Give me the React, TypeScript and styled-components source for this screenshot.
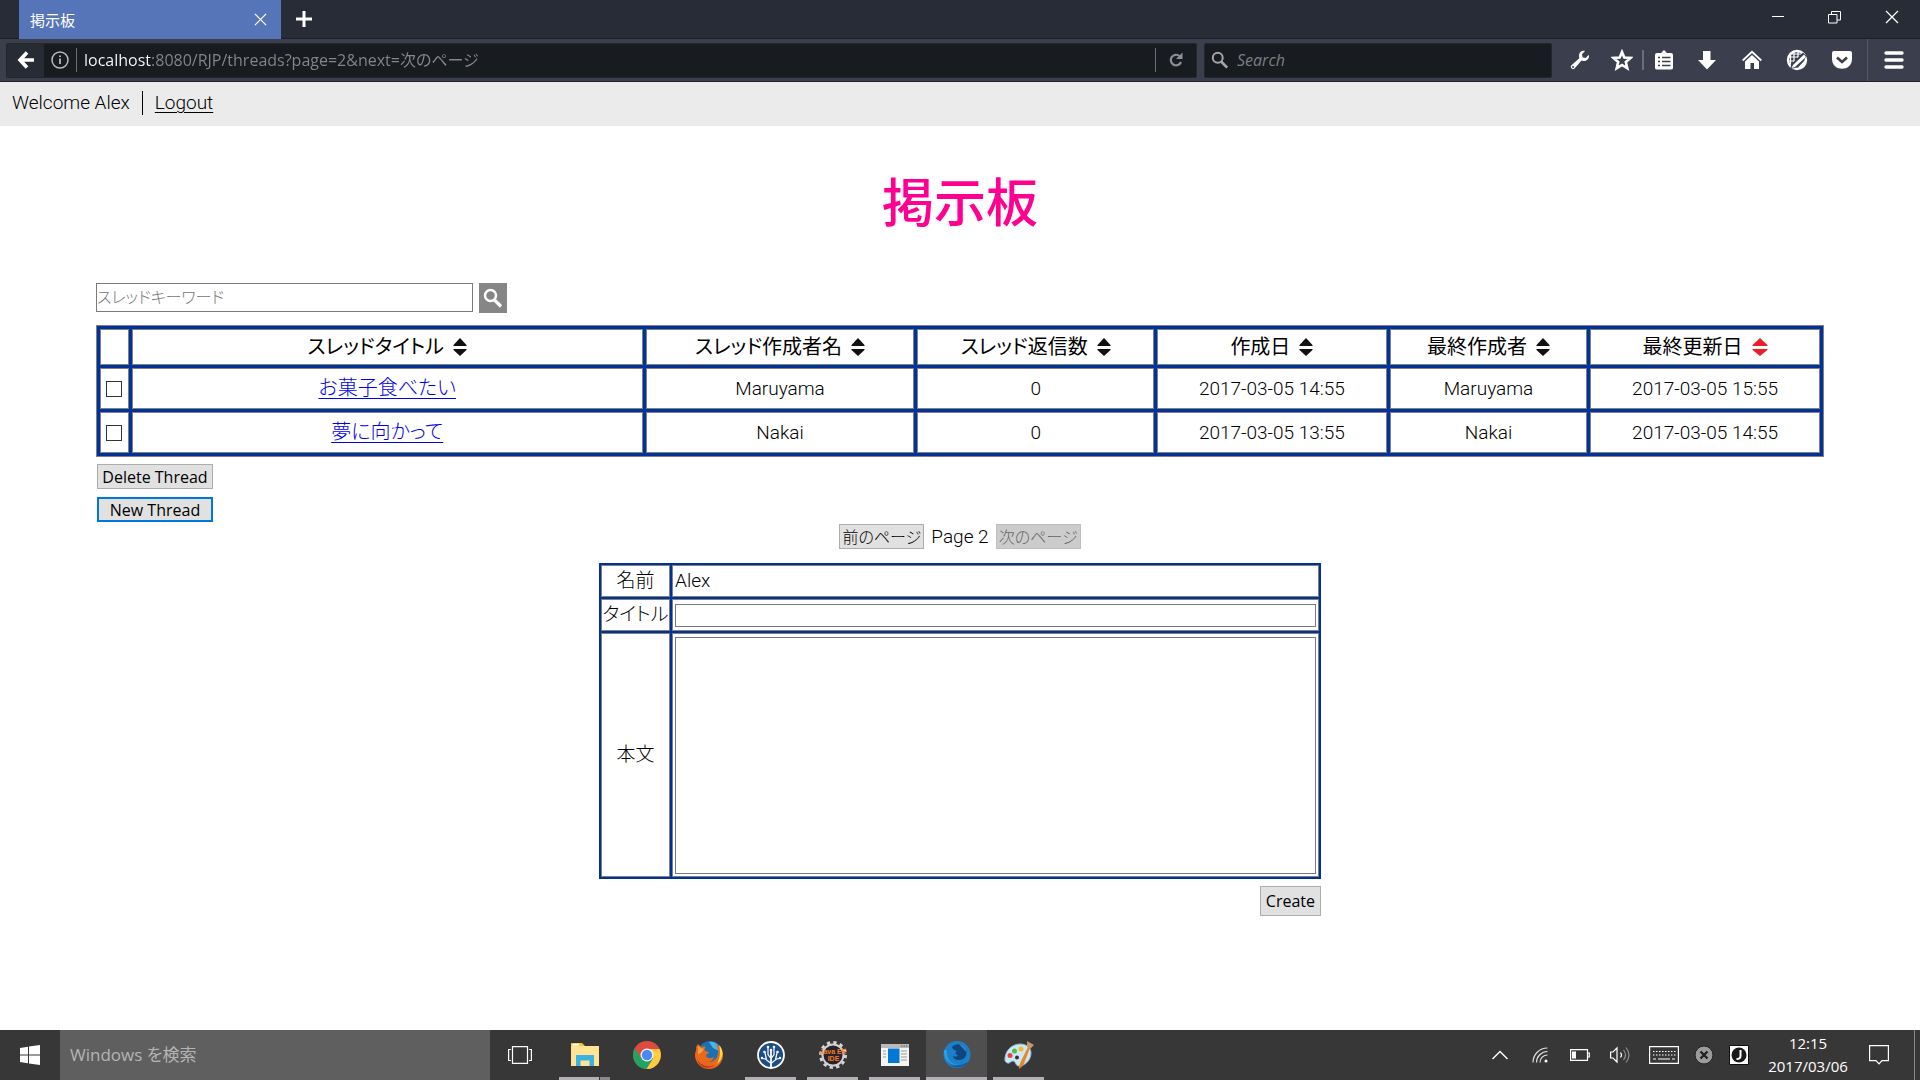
import React from "react";
import styled, { createGlobalStyle, css } from "styled-components";

const uiFont = `"Open Sans", "Noto Sans CJK JP", sans-serif`;
const pageFont = `Roboto, "Noto Sans CJK JP", sans-serif`;

const Global = createGlobalStyle`
  * { box-sizing: border-box; }
  body { margin: 0; background: #fff; }
  button, input, textarea { font: inherit; margin: 0; }
  svg { display: block; flex: none; }
`;

const Screen = styled.div`
  display: flex;
  flex-direction: column;
  min-height: 100vh;
  font-family: ${pageFont};
  font-size: 19px;
  line-height: 24px;
  color: #000;
`;

/* ---------- browser frame ---------- */

const TabStrip = styled.header`
  display: flex;
  align-items: stretch;
  height: 39px;
  padding-left: 19px;
  background: #282c37;
  border-bottom: 1px solid #1c1f27;
  font-family: ${uiFont};
`;

const PlainButton = styled.button<{ $w: number }>`
  display: flex;
  align-items: center;
  justify-content: center;
  flex: none;
  width: ${(p) => p.$w}px;
  padding: 0;
  border: 0;
  background: none;
  color: #fff;
`;

const Tab = styled.div`
  display: flex;
  align-items: center;
  justify-content: space-between;
  width: 262px;
  margin-bottom: -1px;
  padding-left: 11px;
  background: #5675b9;
  color: #fff;
  font-size: 15px;
`;

const WindowControls = styled.div`
  display: flex;
  height: 34px;
  margin-left: auto;
`;

const Toolbar = styled.nav`
  display: flex;
  align-items: center;
  height: 43px;
  padding-left: 6px;
  background: #3b3f4d;
  border-bottom: 1px solid #20222b;
  font-family: ${uiFont};
  font-size: 16px;
`;

const Field = styled.div<{ $w?: number }>`
  display: flex;
  align-items: center;
  height: 35px;
  background: #181b1f;
  border: 1px solid #22262e;
  border-radius: 2px;
  color: #8b8d90;
  ${(p) => (p.$w ? css`flex: none; width: ${p.$w}px; margin-left: 7px; padding-left: 6px; gap: 8px;` : css`flex: 1;`)}
`;

const BackButton = styled(PlainButton)`
  align-self: stretch;
  background: #262b34;
`;

const Rule = styled.span<{ $h: number; $w?: number }>`
  flex: none;
  width: ${(p) => p.$w ?? 1}px;
  height: ${(p) => p.$h}px;
  background: #6b6e78;
`;

const FieldInput = styled.input`
  flex: 1;
  min-width: 0;
  padding: 0;
  border: 0;
  outline: 0;
  background: none;
  color: #8b8d90;
  &::placeholder { color: #7d7f83; font-style: italic; opacity: 1; }
`;

const AddressInput = styled(FieldInput)`
  margin-left: 7px;
  background: linear-gradient(90deg, #fff 67px, #85878b 67px);
  background-clip: text;
  -webkit-background-clip: text;
  -webkit-text-fill-color: transparent;
  font-feature-settings: "palt";
`;

const ToolGroup = styled.div`
  display: flex;
  align-items: center;
  align-self: stretch;
  padding-left: 5px;
`;

const MenuGroup = styled(ToolGroup)`
  margin-left: 3px;
  padding-left: 0;
  border-left: 1px solid #555965;
`;

/* ---------- page ---------- */

const UserBar = styled.div`
  display: flex;
  align-items: center;
  height: 44px;
  padding: 0 12px 2px;
  background: #ebebeb;
  font-weight: 300;
`;

const UserName = styled.span`
  padding-right: 12px;
  border-right: 1px solid #000;
`;

const LogoutLink = styled.a`
  margin-left: 12px;
  color: #000;
  text-underline-offset: 3px;
  text-decoration-thickness: 1px;
`;

const Main = styled.main`
  flex: 1;
  padding: 49px 5% 0;
`;

const Title = styled.h1`
  margin: 0 0 48px;
  font-size: 52px;
  line-height: 60px;
  font-weight: 500;
  text-align: center;
  color: #ff0090;
`;

const SearchForm = styled.form`
  display: flex;
  gap: 6px;
  height: 30px;
  margin-bottom: 12px;
`;

const KeywordInput = styled.input`
  width: 377px;
  height: 29px;
  padding: 0;
  border: 1px solid #7a7a7a;
  font-size: 16px;
  font-feature-settings: "palt";
  &::placeholder { color: #777; opacity: 1; font-weight: 300; }
`;

const SearchButton = styled.button`
  display: flex;
  align-items: center;
  justify-content: center;
  width: 28px;
  height: 30px;
  padding: 0;
  border: 0;
  background: #868686;
`;

const tableBase = css`
  border-collapse: separate;
  background: #003399;
  th, td {
    border: 1px solid #808080;
    background: #fff;
  }
`;

const ThreadTable = styled.table`
  ${tableBase}
  width: 100%;
  table-layout: fixed;
  border: 1px solid #808080;
  border-spacing: 3px;
  font-weight: 300;
  text-align: center;
  font-feature-settings: "palt";
  th, td { height: 41px; padding: 0; }
  th { height: 36px; font-weight: 400; }
  a { font-size: 20px; color: #0000ee; text-underline-offset: 3px; text-decoration-thickness: 1px; }
`;

const Col = styled.col<{ $w: string }>`
  width: ${(p) => p.$w};
`;

const SortButton = styled.button`
  display: inline-flex;
  align-items: center;
  gap: 9px;
  padding: 0;
  border: 0;
  background: none;
  color: #000;
  font-size: 20px;
  line-height: 24px;
  font-feature-settings: "palt";
`;

const Check = styled.input`
  appearance: none;
  display: block;
  width: 16px;
  height: 16px;
  margin: 0 auto;
  border: 1px solid #333;
  background: #fff;
  &:checked { background: #333; }
`;

const ThreadActions = styled.div`
  display: flex;
  flex-direction: column;
  gap: 8px;
  width: 117px;
  margin: 7px 0 2px;
  padding-left: 1px;
`;

const Button = styled.button<{ $focus?: boolean; $tall?: boolean }>`
  height: ${(p) => (p.$tall ? 30 : 25)}px;
  padding: 0 ${(p) => (p.$tall ? 5 : 0)}px;
  border: ${(p) => (p.$focus ? "2px solid #0078d7" : "1px solid #adadad")};
  background: #e1e1e1;
  color: #000;
  font-family: ${uiFont};
  font-size: 16px;
  line-height: 20px;
  white-space: nowrap;
`;

const Pager = styled.div`
  display: flex;
  align-items: center;
  justify-content: center;
  gap: 7px;
  margin-bottom: 14px;
  font-weight: 300;
`;

const PageButton = styled(Button)`
  width: 85px;
  font-weight: 300;
  font-feature-settings: "palt";
  &:disabled { background: #cccccc; border-color: #bfbfbf; color: #666; }
`;

const PostForm = styled.form`
  display: flex;
  flex-direction: column;
  gap: 7px;
  width: 722px;
  max-width: 100%;
  margin: 0 auto;
`;

const PostTable = styled.table`
  ${tableBase}
  width: 100%;
  table-layout: fixed;
  border-spacing: 2px;
  font-weight: 300;
  font-feature-settings: "palt";
  th { padding: 0; font-weight: 300; white-space: nowrap; }
  td { padding: 0 2px; }
  input, textarea {
    display: block;
    width: 100%;
    padding: 1px;
    border: 1px solid #7a7a7a;
    resize: none;
  }
  input { height: 23px; }
  textarea { height: 237px; }
`;

const PostRow = styled.tr<{ $h: number }>`
  height: ${(p) => p.$h}px;
`;

const SubmitRow = styled.div`
  display: flex;
  justify-content: flex-end;
`;

/* ---------- task bar ---------- */

const Taskbar = styled.footer`
  display: flex;
  height: 50px;
  background: #373737;
  font-family: ${uiFont};
  color: #fff;
`;

const TaskSearch = styled.input`
  width: 430px;
  padding: 0 10px;
  border: 0;
  background: #5f5f5f;
  font-size: 17px;
  color: #fff;
  font-feature-settings: "palt";
  &::placeholder { color: #b4b4b4; opacity: 1; }
`;

const Apps = styled.div`
  display: flex;
  gap: 1px;
  margin-left: 4px;
`;

const AppButton = styled.button<{ $active?: boolean }>`
  display: flex;
  flex-direction: column;
  align-items: center;
  justify-content: space-between;
  width: 61px;
  padding: 11px 0 0;
  border: 0;
  background: ${(p) => (p.$active ? "#4f4f4f" : "none")};
`;

const AppLine = styled.span<{ $state: string }>`
  width: ${(p) => (p.$state === "active" ? 61 : 51)}px;
  height: 3px;
  background: ${(p) =>
    p.$state === "none" ? "none" : p.$state === "stack" ? "linear-gradient(90deg, #b2b0b2 40px, #373737 40px, #373737 41px, #8a888a 41px)" : "#b2b0b2"};
`;

const Tray = styled.div`
  display: flex;
  margin-left: auto;
  padding-right: 5px;
`;

const Clock = styled.time`
  display: flex;
  flex-direction: column;
  justify-content: center;
  width: 100px;
  font-size: 15px;
  line-height: 23px;
  text-align: center;
`;

const DesktopEdge = styled.span`
  width: 1px;
  margin-left: 14px;
  background: #8a8a8a;
`;

/* ---------- icons ---------- */

const outline = { fill: "none", stroke: "#fff" } as const;

const SortIcon = ({ active }: { active?: boolean }) => (
  <svg width={active ? 16 : 14} height="18" viewBox="0 0 14 18" preserveAspectRatio="none" fill={active ? "#e8202a" : "#111"}>
    <path d="M7 0 13.500 7V8H.500V7z" />
    <path d="M7 18 .500 12V11H13.500V12z" />
  </svg>
);

const Magnifier = ({ size, color, w }: { size: number; color: string; w: number }) => (
  <svg width={size} height={size} viewBox="0 0 20 20" fill="none" stroke={color} strokeWidth={w}>
    <circle cx="7.500" cy="7.500" r="5.500" />
    <path d="M11.500 12 18 18.500" strokeWidth={w + 0.8} />
  </svg>
);

const Cross = ({ size }: { size: number }) => (
  <svg width={size} height={size} viewBox="0 0 14 14" {...outline} strokeWidth="1.300">
    <path d="M1 1 13 13M13 1 1 13" />
  </svg>
);

const BackIcon = () => (
  <svg width="18" height="18" viewBox="0 0 18 18" {...outline} strokeWidth="3.600">
    <path d="M10 1.500 3 9l7 7.500M3 9h14" />
  </svg>
);

const InfoIcon = () => (
  <svg width="18" height="18" viewBox="0 0 18 18" fill="none" stroke="#b9babc" strokeWidth="1.500">
    <circle cx="9" cy="9" r="8" />
    <path d="M9 7.500V13M9 4.500V6" strokeWidth="1.800" />
  </svg>
);

const ReloadIcon = () => (
  <svg width="16" height="16" viewBox="0 0 16 16" fill="none" stroke="#8e9093" strokeWidth="2.200">
    <path d="M11.500 4A5.300 5.300 0 1 0 13 10" />
    <path d="M14.500 0.500V7H8z" fill="#8e9093" stroke="none" />
  </svg>
);

const WrenchIcon = () => (
  <svg width="20" height="20" viewBox="0 0 20 20">
    <path fill="#fff" d="M18.800 4.800 15.700 8 12.500 7.200 12 4.300 15 1C12 .2 8.900 2.300 9 6L9.300 8.200 1.200 15.500C-.4 17.500 2.200 20.300 4.300 18.700L11.600 10.600C15.500 12 19.800 9.500 18.800 4.800z" />
    <circle cx="3" cy="17" r="1" fill="#3b3f4d" />
  </svg>
);

const StarIcon = () => (
  <svg width="22" height="22" viewBox="0 0 22 22" {...outline} strokeWidth="2.600">
    <path d="M11 3 13.300 8.600 19.500 9 14.800 13 16.300 19.200 11 16 5.700 19.200 7.200 13 2.500 9 8.700 8.600z" />
  </svg>
);

const ClipboardIcon = () => (
  <svg width="20" height="20" viewBox="0 0 20 20">
    <path fill="#fff" d="M3 3h4l3-3 3 3h4q2 0 2 2v13q0 1.500-2 1.500H3q-2 0-2-1.500V5q0-2 2-2z" />
    <path stroke="#3b3f4d" strokeWidth="1.500" d="M4 7.500h2M8 7.500h8.500M4 11.500h2M8 11.500h8.500M4 15.500h2M8 15.500h8.500" />
  </svg>
);

const DownloadIcon = () => (
  <svg width="20" height="20" viewBox="0 0 20 20">
    <path fill="#fff" d="M6 1h7.500v9H19L10 19.500 1 10h5z" />
  </svg>
);

const HomeIcon = () => (
  <svg width="20" height="20" viewBox="0 0 20 20">
    <path {...outline} strokeWidth="1.800" d="M.7 10.500 10 1.800l9.300 8.700" />
    <path fill="#fff" d="M3 11.500 10 5l7 6.500V19h-5v-6H8.500v6H3z" />
  </svg>
);

const GlobePenIcon = () => (
  <svg width="22" height="22" viewBox="0 0 22 22">
    <circle cx="11" cy="11" r="9" {...outline} strokeWidth="2.400" />
    <path {...outline} strokeWidth="1.200" d="M2 8h16M2 12h12M4 5h12M8 2v16M12 2v12M4.500 5v10" />
    <path d="M4 20 5.500 15 17 3.500 21 7.500 9 19z" fill="#3b3f4d" />
    <path d="M5.500 19 7 16 18 5.500 20 8 9 18z" fill="#fff" />
    <path d="M13 19 19.500 12" {...outline} strokeWidth="2" />
  </svg>
);

const PocketIcon = () => (
  <svg width="22" height="20" viewBox="0 0 22 20">
    <path fill="#fff" d="M3 1h16q2 0 2 2v6c0 13-20 13-20 0V3q0-2 2-2z" />
    <path fill="none" stroke="#3b3f4d" strokeWidth="2.600" d="M6 7.500 11 12l5-4.500" />
  </svg>
);

const MenuIcon = () => (
  <svg width="20" height="18" viewBox="0 0 20 18" {...outline} strokeWidth="3.400" strokeLinecap="round">
    <path d="M2 2h16M2 9h16M2 16h16" />
  </svg>
);

const PlusIcon = () => (
  <svg width="16" height="16" viewBox="0 0 16 16" {...outline} strokeWidth="3">
    <path d="M8 0v16M0 8h16" />
  </svg>
);

const ExplorerIcon = () => (
  <svg width="28" height="28" viewBox="0 0 28 28">
    <path d="M0 2h11l3 3H0z" fill="#f6c73c" />
    <path d="M0 5.500 1 3h6l1 2h20v20H0z" fill="#ffe493" />
    <path d="M2 3.500h6" stroke="#fff" strokeWidth="1.500" />
    <path d="M5 25V14h18v11h-4.500v-5.500h-9V25z" fill="#3bb1e4" />
  </svg>
);

const ChromeIcon = () => (
  <svg width="28" height="28" viewBox="0 0 28 28">
    <circle cx="14" cy="14" r="14" fill="#dd4b3e" />
    <path d="M1.900 7A14 14 0 0 0 13.500 28L20 17.500 8 17.500z" fill="#1fa463" />
    <path d="M13.500 28A14 14 0 0 0 26.500 8H14l6 9.500z" fill="#ffcd40" />
    <circle cx="14" cy="14" r="6.500" fill="#f4f4f4" />
    <circle cx="14" cy="14" r="5.200" fill="#4889f4" />
  </svg>
);

const FirefoxIcon = () => (
  <svg width="28" height="28" viewBox="0 0 28 28">
    <circle cx="15" cy="12.500" r="12.500" fill="#1b6fb5" />
    <path d="M14 1c7-1 11 4 10 9l-6-3z" fill="#49b4e6" />
    <path d="M1 6 3 3l3 3c3-1 5 0 5 0-1 1-2 2-1 4l4 1c0 2-3 2-3 4 2 3 6 2 8 1-1 4-5 6-9 4 7 3 14-2 13-11-.2-3-2-5-3-6 6 2 8 7 8 11a14 14 0 0 1-28 0C0 11 2 9 1 6z" fill="#e8681c" />
    <path d="M24 4c5 5 5 14-2 19 3-6 4-12 2-19z" fill="#ffd94a" />
    <path d="M2 18c3 6 10 9 18 6-6 5-16 3-18-6z" fill="#c8331a" />
    <path d="M3 5l3 2 3 1-3 4-3 1z" fill="#f8a13a" />
  </svg>
);

const TreeIcon = () => (
  <svg width="28" height="28" viewBox="0 0 28 28" {...outline} strokeWidth="1.200">
    <circle cx="14" cy="14" r="13" fill="#1d4e89" strokeWidth="1.800" />
    <path d="M14 27V9" strokeWidth="1.800" />
    <path d="M13.500 22 8.500 18 5.500 17.500M9.500 18.500 8 12M13.500 17 11 13.500V7M14.500 22l5-4 3-.500M18.500 18.500 20 12M14.500 17l2.500-3.500V7" />
    <g fill="#fff" stroke="none">
      <circle cx="11" cy="6" r="1.300" /><circle cx="17" cy="6" r="1.300" /><circle cx="14" cy="9" r="1.300" />
      <circle cx="7.500" cy="11" r="1.300" /><circle cx="20.500" cy="11" r="1.300" /><circle cx="5" cy="17" r="1.200" /><circle cx="23" cy="17" r="1.200" />
    </g>
  </svg>
);

const JavaIcon = () => (
  <svg width="28" height="28" viewBox="0 0 28 28">
    <circle cx="14" cy="14" r="12.500" fill="none" stroke="#d4d4d4" strokeWidth="3" strokeDasharray="3.300 3.240" />
    <circle cx="14" cy="14" r="10.500" fill="#2a2030" stroke="#cfcfcf" strokeWidth="2" />
    <g fill="#f08019" fontFamily="Liberation Sans" fontSize="7" fontWeight="bold" textAnchor="middle">
      <text x="14" y="13">Java EE</text>
      <text x="14.500" y="19.500">IDE</text>
    </g>
  </svg>
);

const WindowIcon = () => (
  <svg width="28" height="28" viewBox="0 0 28 28">
    <path d="M0 3h28v22H0z" fill="#f4f4f4" />
    <path d="M0 3h28v4H0z" fill="#b9b9b9" />
    <path d="M20 5h1.500M22.500 5H24M25 5h1.500" stroke="#555" />
    <path d="M2 10h3M2 13h3M2 16h3M20 10h6M20 13h6M20 16h6M20 19h6" stroke="#999" />
    <path d="M7 7.500h11.500V22H7z" fill="#0078d7" />
  </svg>
);

const DevFoxIcon = () => (
  <svg width="28" height="28" viewBox="0 0 28 28">
    <circle cx="14" cy="13.500" r="13.500" fill="#1c80c8" />
    <path d="M9 6c3-4 12-4 14 2 2 7-2 11-7 11-4 0-6-2-6-4 2 1 4 1 5-1-3 0-3-3-1-4-2-1-4-1-5-4z" fill="#10457f" />
    <path d="M16 3c5 0 8 4 7 8-2-3-5-5-7-8z" fill="#2a86cc" />
    <path d="M1 9C0 20 9 25 17 24 8 24 3 18 4 9z" fill="#2ba0e6" />
    <path d="M6 23c6 5 15 4 19-2-5 3-12 5-19 2z" fill="#125a9c" />
  </svg>
);

const PaintIcon = () => (
  <svg width="30" height="28" viewBox="0 0 30 28">
    <path d="M1 20C0 11 7 3 16 3c7 0 11 4 11 9 0 7-6 13-12 13-4 0-3-5-6-5-3 0-4 5-8 0z" fill="#cfe6f4" stroke="#8fb8d4" />
    <circle cx="6" cy="14.500" r="2.500" fill="#e2453a" /><circle cx="10.500" cy="10" r="2.500" fill="#55b947" /><circle cx="17" cy="8" r="2.500" fill="#f5b92e" /><circle cx="13" cy="16.500" r="2" fill="#333" />
    <path d="M15 28c0-4 1-6 3-10l6-12 2 1-5 13c-1 4-3 6-6 8z" fill="#e08a2c" />
    <path d="m23 0 7 4-4 4-3-2z" fill="#c59b6d" />
  </svg>
);

const StartIcon = () => (
  <svg width="20" height="20" viewBox="0 0 20 20" fill="#fff">
    <path d="M0 3 8 1.800V9.500H0zM9 1.600 20 0V9.500H9zM0 10.500H8V18.200L0 17zM9 10.500H20V20L9 18.400z" />
  </svg>
);

const TaskViewIcon = () => (
  <svg width="24" height="18" viewBox="0 0 24 18" {...outline} strokeWidth="1.200">
    <path d="M4.500.6h15v16.800h-15zM3 3.500H.6v11H3M21 3.500h2.400v11H21" />
  </svg>
);

const ChevronIcon = () => (
  <svg width="16" height="10" viewBox="0 0 16 10" {...outline} strokeWidth="1.400"><path d="M.5 9 8 1.500 15.500 9" /></svg>
);

const WifiIcon = () => (
  <svg width="16" height="16" viewBox="0 0 16 16" {...outline} strokeWidth="1.200">
    <path d="M1 15.500A14.500 14.500 0 0 1 15.500 1M4.500 15.500a11 11 0 0 1 11-11M8 15.500A7.500 7.500 0 0 1 15.500 8" opacity=".85" />
    <circle cx="14" cy="14" r="1.500" fill="#fff" stroke="none" />
  </svg>
);

const BatteryIcon = () => (
  <svg width="20" height="12" viewBox="0 0 20 12" {...outline} strokeWidth="1.200">
    <path d="M.6.6H17.500V11.400H.6zM17.500 4H19.300V8H17.500" /><path d="M2 2.500h4v7H2z" fill="#fff" stroke="none" />
  </svg>
);

const VolumeIcon = () => (
  <svg width="20" height="18" viewBox="0 0 20 18" {...outline} strokeWidth="1.200">
    <path d="M.6 6H3l4-4v14l-4-4H.6z" /><path d="M10.500 6.500q2 2.500 0 5" /><path d="M13.500 4q4 5 0 10M16 1.500q6 7.500 0 15" opacity=".45" />
  </svg>
);

const KeyboardIcon = () => (
  <svg width="30" height="18" viewBox="0 0 30 18" {...outline} strokeWidth="1.200">
    <path d="M.6.600h28.800v16.800H.6z" />
    <path d="M4 5.500h23M4 9h23" strokeDasharray="1.500 1.500" /><path d="M4 13h3M9 13h12M23 13h3" />
  </svg>
);

const BlockedIcon = () => (
  <svg width="20" height="20" viewBox="0 0 20 20">
    <circle cx="10" cy="10" r="9" fill="#9b9b9b" stroke="#222" /><path d="M6.500 6.500l7 7M13.500 6.500l-7 7" stroke="#222" strokeWidth="2.400" />
  </svg>
);

const ImeIcon = () => (
  <svg width="20" height="20" viewBox="0 0 20 20">
    <path d="M.5.500h19v19H.5z" fill="#fff" stroke="#111" /><circle cx="10" cy="10" r="7.500" fill="#1a1a1a" />
    <path d="M11.500 5v6q0 3-4 3" fill="none" stroke="#fff" strokeWidth="2" />
  </svg>
);

const NoticeIcon = () => (
  <svg width="20" height="20" viewBox="0 0 20 20" {...outline} strokeWidth="1.200"><path d="M.6.600h18.800v15H13L10 18.800 7 15.600H.6z" /></svg>
);

/* ---------- data ---------- */

const columns = [
  { name: "スレッドタイトル", width: "30%" },
  { name: "スレッド作成者名", width: "15.8%" },
  { name: "スレッド返信数", width: "13.9%" },
  { name: "作成日", width: "13.5%" },
  { name: "最終作成者", width: "11.6%" },
  { name: "最終更新日", width: "13.5%", active: true },
];

const threads = [
  { title: "お菓子食べたい", author: "Maruyama", replies: 0, created: "2017-03-05 14:55", updated: "2017-03-05 15:55" },
  { title: "夢に向かって", author: "Nakai", replies: 0, created: "2017-03-05 13:55", updated: "2017-03-05 14:55" },
];

const apps = [
  { label: "Explorer", Icon: ExplorerIcon, state: "stack" },
  { label: "Chrome", Icon: ChromeIcon, state: "none" },
  { label: "Firefox", Icon: FirefoxIcon, state: "none" },
  { label: "SourceTree", Icon: TreeIcon, state: "open" },
  { label: "Eclipse", Icon: JavaIcon, state: "open" },
  { label: "Window", Icon: WindowIcon, state: "open" },
  { label: "Firefox Developer Edition", Icon: DevFoxIcon, state: "active" },
  { label: "Paint", Icon: PaintIcon, state: "open" },
];

const tray = [
  { label: "Show hidden icons", Icon: ChevronIcon, w: 41 },
  { label: "Network", Icon: WifiIcon, w: 40 },
  { label: "Battery", Icon: BatteryIcon, w: 40 },
  { label: "Volume", Icon: VolumeIcon, w: 40 },
  { label: "Keyboard", Icon: KeyboardIcon, w: 48 },
  { label: "Input off", Icon: BlockedIcon, w: 32 },
  { label: "IME", Icon: ImeIcon, w: 38 },
];

const Browser = () => (
  <>
    <TabStrip>
      <Tab>
        <span>掲示板</span>
        <PlainButton $w={42} aria-label="Close tab"><Cross size={13} /></PlainButton>
      </Tab>
      <PlainButton $w={46} aria-label="New tab"><PlusIcon /></PlainButton>
      <WindowControls>
        <PlainButton $w={57} aria-label="Minimize">
          <svg width="12" height="12" viewBox="0 0 12 12" {...outline}><path d="M0 5.500h12" /></svg>
        </PlainButton>
        <PlainButton $w={57} aria-label="Restore">
          <svg width="13" height="13" viewBox="0 0 13 13" {...outline}><path d="M.5 3.500h8.500v8.500H.500zM3.500 3.500V.500h9v8.500H9" /></svg>
        </PlainButton>
        <PlainButton $w={57} aria-label="Close window"><Cross size={14} /></PlainButton>
      </WindowControls>
    </TabStrip>
    <Toolbar>
      <Field>
        <BackButton $w={37} aria-label="Back"><BackIcon /></BackButton>
        <PlainButton $w={32} aria-label="Site information"><InfoIcon /></PlainButton>
        <Rule $h={24} />
        <AddressInput aria-label="Address" defaultValue="localhost:8080/RJP/threads?page=2&next=次のページ" />
        <Rule $h={24} />
        <PlainButton $w={40} aria-label="Reload"><ReloadIcon /></PlainButton>
      </Field>
      <Field $w={348}>
        <Magnifier size={18} color="#a5a6a8" w={2.2} />
        <FieldInput aria-label="Search the web" placeholder="Search" />
      </Field>
      <ToolGroup>
        <PlainButton $w={45} aria-label="Developer tools"><WrenchIcon /></PlainButton>
        <PlainButton $w={40} aria-label="Bookmark"><StarIcon /></PlainButton>
        <Rule $h={20} $w={2} />
        <PlainButton $w={40} aria-label="Bookmarks list"><ClipboardIcon /></PlainButton>
        <PlainButton $w={45} aria-label="Downloads"><DownloadIcon /></PlainButton>
        <PlainButton $w={45} aria-label="Home"><HomeIcon /></PlainButton>
        <PlainButton $w={45} aria-label="Web IDE"><GlobePenIcon /></PlainButton>
        <PlainButton $w={45} aria-label="Pocket"><PocketIcon /></PlainButton>
      </ToolGroup>
      <MenuGroup>
        <PlainButton $w={52} aria-label="Menu"><MenuIcon /></PlainButton>
      </MenuGroup>
    </Toolbar>
  </>
);

const Threads = () => (
  <ThreadTable>
    <colgroup>
      <Col $w="1.7%" />
      {columns.map((c) => <Col key={c.name} $w={c.width} />)}
    </colgroup>
    <thead>
      <tr>
        <th />
        {columns.map((c) => (
          <th key={c.name} scope="col">
            <SortButton>{c.name}<SortIcon active={c.active} /></SortButton>
          </th>
        ))}
      </tr>
    </thead>
    <tbody>
      {threads.map((t) => (
        <tr key={t.title}>
          <td><Check type="checkbox" aria-label={t.title} /></td>
          <td><a href="#thread">{t.title}</a></td>
          <td>{t.author}</td>
          <td>{t.replies}</td>
          <td>{t.created}</td>
          <td>{t.author}</td>
          <td>{t.updated}</td>
        </tr>
      ))}
    </tbody>
  </ThreadTable>
);

const NewPost = () => (
  <PostForm onSubmit={(e) => e.preventDefault()}>
    <PostTable>
      <colgroup>
        <Col $w="69px" />
        <Col $w="auto" />
      </colgroup>
      <tbody>
        <PostRow $h={32}><th scope="row">名前</th><td>Alex</td></PostRow>
        <PostRow $h={32}>
          <th scope="row"><label htmlFor="title">タイトル</label></th>
          <td><input id="title" type="text" /></td>
        </PostRow>
        <PostRow $h={244}>
          <th scope="row"><label htmlFor="body">本文</label></th>
          <td><textarea id="body" /></td>
        </PostRow>
      </tbody>
    </PostTable>
    <SubmitRow><Button $tall>Create</Button></SubmitRow>
  </PostForm>
);

export default function App() {
  return (
    <Screen lang="ja">
      <Global />
      <Browser />
      <UserBar>
        <UserName>Welcome Alex</UserName>
        <LogoutLink href="#logout">Logout</LogoutLink>
      </UserBar>
      <Main>
        <Title>掲示板</Title>
        <SearchForm onSubmit={(e) => e.preventDefault()}>
          <KeywordInput type="text" aria-label="スレッドキーワード" placeholder="スレッドキーワード" />
          <SearchButton aria-label="検索"><Magnifier size={20} color="#fff" w={2.4} /></SearchButton>
        </SearchForm>
        <Threads />
        <ThreadActions>
          <Button>Delete Thread</Button>
          <Button $focus>New Thread</Button>
        </ThreadActions>
        <Pager>
          <PageButton>前のページ</PageButton>
          <span>Page 2</span>
          <PageButton disabled>次のページ</PageButton>
        </Pager>
        <NewPost />
      </Main>
      <Taskbar>
        <PlainButton $w={60} aria-label="Start"><StartIcon /></PlainButton>
        <TaskSearch aria-label="Windows を検索" placeholder="Windows を検索" />
        <PlainButton $w={60} aria-label="Task view"><TaskViewIcon /></PlainButton>
        <Apps>
          {apps.map(({ label, Icon, state }) => (
            <AppButton key={label} aria-label={label} $active={state === "active"}>
              <Icon />
              <AppLine $state={state} />
            </AppButton>
          ))}
        </Apps>
        <Tray>
          {tray.map(({ label, Icon, w }) => (
            <PlainButton key={label} $w={w} aria-label={label}><Icon /></PlainButton>
          ))}
          <Clock dateTime="2017-03-06T12:15">
            <span>12:15</span>
            <span>2017/03/06</span>
          </Clock>
          <PlainButton $w={42} aria-label="Notifications"><NoticeIcon /></PlainButton>
          <DesktopEdge />
        </Tray>
      </Taskbar>
    </Screen>
  );
}
